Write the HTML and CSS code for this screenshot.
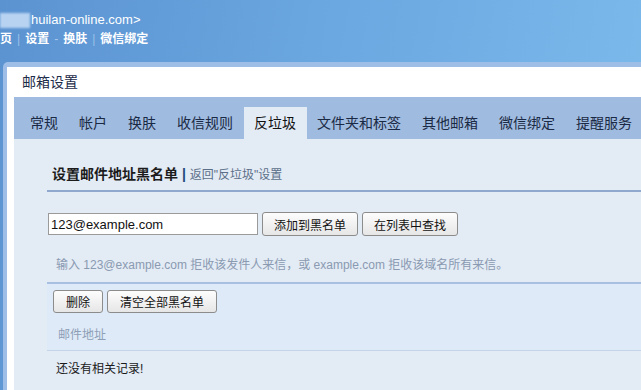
FILE: index.html
```html
<!DOCTYPE html>
<html lang="zh-CN">
<head>
    <meta charset="UTF-8">
    <meta name="viewport" content="width=device-width, initial-scale=1.0">
    <title>邮箱设置</title>
    <link rel="stylesheet" href="styles.css">
</head>
<body>
    <div class="top">
        <div class="account"><span class="masked"></span>huilan-online.com&gt;</div>
        <div class="topnav">
            <a href="#">首页</a><span class="sep">|</span><a href="#">设置</a><span class="sep dash">-</span><a href="#">换肤</a><span class="sep">|</span><a href="#">微信绑定</a>
        </div>
    </div>

    <div class="panel">
        <div class="panel-inner">
            <div class="panel-title">邮箱设置</div>
            <ul class="tabs">
                <li>常规</li>
                <li>帐户</li>
                <li>换肤</li>
                <li>收信规则</li>
                <li class="active">反垃圾</li>
                <li>文件夹和标签</li>
                <li>其他邮箱</li>
                <li>微信绑定</li>
                <li>提醒服务</li>
            </ul>
            <div class="content">
                <div class="section">
                    <h2 class="section-title">设置邮件地址黑名单 <span class="bar">|</span> <a href="#" class="back">返回"反垃圾"设置</a></h2>
                    <div class="add-row">
                        <input type="text" class="addr-input" value="123@example.com">
                        <button class="btn">添加到黑名单</button>
                        <button class="btn">在列表中查找</button>
                    </div>
                    <p class="hint">输入 123@example.com 拒收该发件人来信，或 example.com 拒收该域名所有来信。</p>
                    <div class="toolbar">
                        <div class="toolbar-buttons">
                            <button class="btn btn-small">删除</button>
                            <button class="btn btn-small">清空全部黑名单</button>
                        </div>
                        <div class="list-head">邮件地址</div>
                    </div>
                    <div class="empty">还没有相关记录!</div>
                </div>
            </div>
        </div>
    </div>
</body>
</html>
```

FILE: styles.css
```css
html {
    background: linear-gradient(100deg, #5b93d1 0%, #6aa6e0 45%, #7dbbec 100%);
    min-height: 100%;
}

body {
    margin: 0;
    font-family: "Liberation Sans", "Noto Sans CJK SC", sans-serif;
    font-size: 12px;
    color: #222;
    overflow: hidden;
    height: 390px;
}

a {
    text-decoration: none;
}

.top {
    height: 62px;
    color: #fff;
}

.account {
    padding-top: 12px;
    height: 16px;
    line-height: 16px;
    font-size: 13px;
    display: flex;
    align-items: center;
}

.masked {
    display: inline-block;
    width: 30px;
    height: 15px;
    margin-right: 1px;
    background: #b7d3f1;
    filter: blur(1px);
}

.topnav {
    margin-top: 2px;
    margin-left: -12px;
    line-height: 18px;
    font-size: 12px;
    font-weight: bold;
}

.topnav a {
    color: #fff;
}

.sep {
    color: #9cc0e8;
    font-weight: normal;
    margin: 0 5px;
}

.dash {
    color: #a8c8ec;
}

.panel {
    margin-left: 3px;
    margin-right: -20px;
    padding: 5px 0 0 4px;
    background: #9ebee7;
    border-radius: 5px 0 0 0;
}

.panel-inner {
    background: #fff;
    padding-left: 7px;
    height: 330px;
}

.panel-title {
    height: 30px;
    line-height: 30px;
    padding-left: 8px;
    font-size: 14px;
    color: #1b2b48;
}

.tabs {
    list-style: none;
    margin: 0;
    padding: 10px 0 0 5.5px;
    background: #a0bbe0;
    display: flex;
    white-space: nowrap;
}

.tabs li {
    padding: 0 10.5px;
    height: 32px;
    line-height: 32px;
    font-size: 14px;
    color: #1a2a44;
}

.tabs li.active {
    background: #e3ebf5;
    color: #111;
}

.content {
    background: #e3ebf5;
    height: 260px;
}

.section {
    padding: 25px 0 0 33px;
}

.section-title {
    margin: 0;
    padding: 0 0 5px 5px;
    line-height: 20px;
    font-size: 14px;
    font-weight: bold;
    color: #1c1c1c;
    border-bottom: 2px solid #8ea9cd;
}

.bar {
    color: #224a7a;
}

.back {
    font-size: 12px;
    font-weight: normal;
    color: #5b6f88;
}

.add-row {
    margin-top: 20px;
    display: flex;
    align-items: center;
    gap: 4px;
    height: 24px;
}

.addr-input {
    margin: 0 0 0 1px;
    width: 210px;
    height: 22px;
    box-sizing: border-box;
    border: 1px solid #9a9a9a;
    padding: 0 2px;
    font-family: "Liberation Sans", sans-serif;
    font-size: 13px;
    color: #111;
    background: #fff;
}

.btn {
    height: 24px;
    padding: 0 11px;
    margin: 0;
    font-family: "Liberation Sans", "Noto Sans CJK SC", sans-serif;
    font-size: 12px;
    color: #111;
    border: 1px solid #8c8c8c;
    border-radius: 3px;
    background: linear-gradient(#fdfdfd, #e6e6e6);
}

.hint {
    margin: 0;
    padding: 19px 0 7px 9px;
    line-height: 20px;
    color: #8a9ab1;
}

.toolbar {
    border-top: 2px solid #a8c1e2;
    background: #dfeaf8;
}

.toolbar-buttons {
    padding: 6px 0 0 6px;
    display: flex;
    gap: 4px;
}

.btn-small {
    height: 23px;
    padding: 0 12px;
}

.list-head {
    padding: 14px 0 7px 11px;
    line-height: 16px;
    color: #8d9fb6;
    border-bottom: 1px solid #c5d4e7;
}

.empty {
    padding: 8px 0 0 9px;
    line-height: 20px;
    color: #1a1a1a;
}
```
